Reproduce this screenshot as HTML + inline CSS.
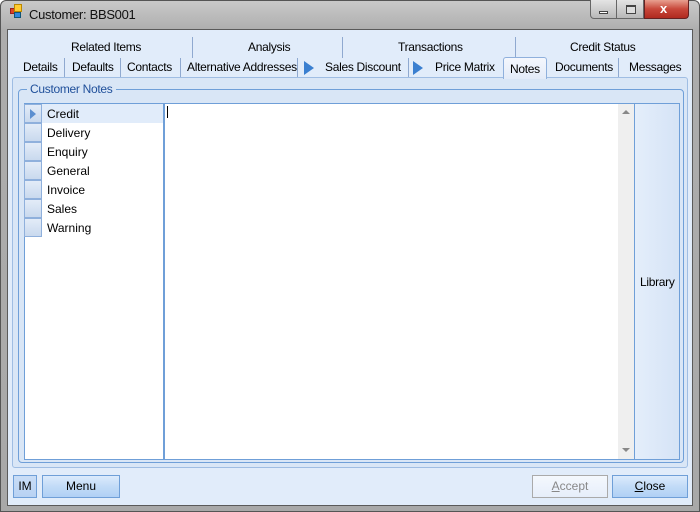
<!DOCTYPE html>
<html><head><meta charset="utf-8"><style>
*{margin:0;padding:0;box-sizing:border-box}
body{width:700px;height:512px;overflow:hidden;background:#fff;font-family:"Liberation Sans",sans-serif;font-size:12px;color:#000;position:relative}
.a{position:absolute}
.t{position:absolute;white-space:nowrap;font-size:12px;letter-spacing:-0.3px}
.vd{position:absolute;width:1px;background:#8fa9d0}
.btn{position:absolute;border:1px solid #6f9fd8;background:linear-gradient(#dcebfc,#c2dbf7 50%,#b0d0f5);text-align:center;line-height:20px}
.row{position:absolute;left:24px;width:140px;height:19px}
.rh{position:absolute;left:0;top:0;width:18px;height:19px;border:1px solid #8fb0dc;background:linear-gradient(#e3ecf8,#c9d9ee)}
.rt{position:absolute;left:23px;top:3px}
</style></head><body>
<div class="a" style="left:0;top:0;width:700px;height:512px;border:1px solid #555;border-radius:6px 6px 0 0;background:linear-gradient(#c9c9c9,#adadad 30px,#a8a8a8)"></div>
<div class="a" style="left:10px;top:8px;width:6px;height:6px;background:#d42;border:1px solid #922"></div>
<div class="a" style="left:14px;top:4px;width:8px;height:8px;background:#fc3;border:1px solid #b80"></div>
<div class="a" style="left:14px;top:12px;width:7px;height:6px;background:#38d;border:1px solid #157"></div>
<div class="t" style="left:29px;top:7px;font-size:13px;color:#111">Customer: BBS001</div>
<div class="a" style="left:590px;top:0;width:27px;height:19px;border:1px solid #666;border-top:none;border-radius:0 0 0 4px;background:linear-gradient(#e4e4e4,#b8b8b8)"></div>
<div class="a" style="left:599px;top:11px;width:9px;height:3px;background:#fff;border:1px solid #444"></div>
<div class="a" style="left:617px;top:0;width:27px;height:19px;border:1px solid #666;border-top:none;border-left:none;background:linear-gradient(#e4e4e4,#b8b8b8)"></div>
<div class="a" style="left:626px;top:5px;width:10px;height:9px;border:1px solid #444;border-top-width:2px;background:#ddd"></div>
<div class="a" style="left:644px;top:0;width:45px;height:19px;border:1px solid #622;border-top:none;border-radius:0 0 4px 0;background:linear-gradient(#e8a090,#c8473a 50%,#b02a1f)"></div>
<div class="t" style="left:660px;top:1px;color:#fff;font-weight:bold;font-size:13px">x</div>
<div class="a" style="left:7px;top:29px;width:686px;height:477px;border:1px solid #5a5a5a;background:#e1ecfa"></div>
<div class="t" style="left:71px;top:40px">Related Items</div>
<div class="t" style="left:248px;top:40px">Analysis</div>
<div class="t" style="left:398px;top:40px">Transactions</div>
<div class="t" style="left:570px;top:40px">Credit Status</div>
<div class="vd" style="left:192px;top:37px;height:21px"></div>
<div class="vd" style="left:342px;top:37px;height:21px"></div>
<div class="vd" style="left:515px;top:37px;height:21px"></div>
<div class="t" style="left:23px;top:60px">Details</div>
<div class="t" style="left:72px;top:60px">Defaults</div>
<div class="t" style="left:127px;top:60px">Contacts</div>
<div class="t" style="left:187px;top:60px">Alternative Addresses</div>
<div class="t" style="left:325px;top:60px">Sales Discount</div>
<div class="t" style="left:435px;top:60px">Price Matrix</div>
<div class="t" style="left:555px;top:60px">Documents</div>
<div class="t" style="left:629px;top:60px">Messages</div>
<div class="vd" style="left:64px;top:58px;height:19px"></div>
<div class="vd" style="left:120px;top:58px;height:19px"></div>
<div class="vd" style="left:180px;top:58px;height:19px"></div>
<div class="vd" style="left:297px;top:58px;height:19px"></div>
<div class="vd" style="left:408px;top:58px;height:19px"></div>
<div class="vd" style="left:618px;top:58px;height:19px"></div>
<div class="a" style="left:304px;top:61px;width:0;height:0;border-left:10px solid #3a7fd0;border-top:7px solid transparent;border-bottom:7px solid transparent"></div>
<div class="a" style="left:413px;top:61px;width:0;height:0;border-left:10px solid #3a7fd0;border-top:7px solid transparent;border-bottom:7px solid transparent"></div>
<div class="a" style="left:12px;top:77px;width:676px;height:391px;border:1px solid #9fbde3;border-radius:3px;background:#d9e6f6"></div>
<div class="a" style="left:503px;top:57px;width:44px;height:22px;border:1px solid #8fb0dc;border-bottom:none;border-radius:3px 3px 0 0;background:linear-gradient(#f4f7fd,#e3ebf8)"></div>
<div class="t" style="left:510px;top:62px">Notes</div>
<div class="a" style="left:18px;top:89px;width:666px;height:374px;border:1px solid #6f9fd8;border-radius:4px"></div>
<div class="t" style="left:27px;top:82px;color:#1f4f9a;background:#d9e6f6;padding:0 3px">Customer Notes</div>
<div class="a" style="left:24px;top:103px;width:141px;height:357px;border:1px solid #6f9fd8;background:#fff"></div>
<div class="a" style="left:25px;top:104px;width:138px;height:19px;background:#e1ecfa"></div>
<div class="row" style="top:104px"><div class="rh"></div><div class="a" style="left:6px;top:5px;border-left:6px solid #5b8fd0;border-top:5px solid transparent;border-bottom:5px solid transparent"></div><div class="rt">Credit</div></div>
<div class="row" style="top:123px"><div class="rh"></div><div class="rt">Delivery</div></div>
<div class="row" style="top:142px"><div class="rh"></div><div class="rt">Enquiry</div></div>
<div class="row" style="top:161px"><div class="rh"></div><div class="rt">General</div></div>
<div class="row" style="top:180px"><div class="rh"></div><div class="rt">Invoice</div></div>
<div class="row" style="top:199px"><div class="rh"></div><div class="rt">Sales</div></div>
<div class="row" style="top:218px"><div class="rh"></div><div class="rt">Warning</div></div>
<div class="a" style="left:163px;top:103px;width:473px;height:357px;border:1px solid #6f9fd8;background:#fff"></div>
<div class="a" style="left:163px;top:103px;width:2px;height:357px;background:#6f9fd8"></div>
<div class="a" style="left:167px;top:106px;width:1px;height:12px;background:#000"></div>
<div class="a" style="left:618px;top:104px;width:16px;height:355px;background:#efefef"></div>
<div class="a" style="left:622px;top:110px;border-bottom:4px solid #888;border-left:4px solid transparent;border-right:4px solid transparent"></div>
<div class="a" style="left:622px;top:448px;border-top:4px solid #888;border-left:4px solid transparent;border-right:4px solid transparent"></div>
<div class="a" style="left:634px;top:103px;width:46px;height:357px;border:1px solid #6f9fd8;background:linear-gradient(90deg,#e4eefb,#d5e3f6)"></div>
<div class="t" style="left:640px;top:275px">Library</div>
<div class="btn" style="left:13px;top:475px;width:24px;height:23px;background:linear-gradient(#c9ddf6,#b8d2f3)">IM</div>
<div class="btn" style="left:42px;top:475px;width:78px;height:23px">Menu</div>
<div class="btn" style="left:532px;top:475px;width:76px;height:23px;border-color:#aaa;background:linear-gradient(#f4f8fd,#e6eefa);color:#888"><u>A</u>ccept</div>
<div class="btn" style="left:612px;top:475px;width:76px;height:23px"><u>C</u>lose</div>
</body></html>
